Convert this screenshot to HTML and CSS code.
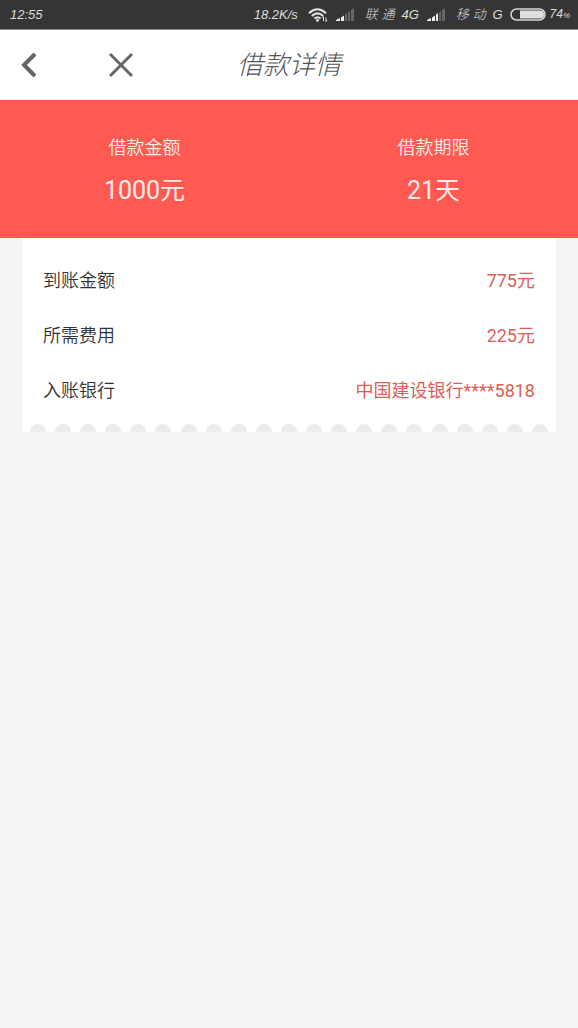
FILE: index.html
```html
<!DOCTYPE html>
<html lang="zh-CN">
<head>
<meta charset="utf-8">
<meta name="viewport" content="width=device-width, initial-scale=1">
<title>借款详情</title>
<link rel="stylesheet" href="styles.css">
</head>
<body>
<div class="status-bar">
  <span class="status-time">12:55</span>
  <div class="status-right">
    <span>18.2K/s</span>
    <svg class="wifi" viewBox="0 0 20 14" width="20" height="14" aria-hidden="true">
      <g fill="none" stroke="#e4e4e4" stroke-width="2">
        <path d="M1 5.2Q9.500-2.600 18 5.200"/>
        <path d="M3.800 8Q9.500 2.800 15.200 8"/>
        <path d="M6.400 10.600Q9.500 7.800 12.600 10.600"/>
      </g>
      <circle cx="9.500" cy="12.300" r="1.500" fill="#e4e4e4"/>
      <path d="M15.500 9v4M18 9.500v4M14.500 10l1-1.500M19 12l-1 1.500" stroke="#e4e4e4" fill="none"/>
    </svg>
    <svg class="signal" viewBox="0 0 19 13" width="19" height="13" aria-hidden="true">
      <path d="M0 13v-1l4-2v3zM5 9.500l3-2V13H5z" fill="#eeeeee"/>
      <path d="M9 6.500l2-1.500v8H9zM12 4.500L14 3v10h-2zM15 2l3-2v13h-3z" fill="#666666"/>
    </svg>
    <span class="carrier">联 通</span>
    <span class="network">4G</span>
    <svg class="signal" viewBox="0 0 19 13" width="19" height="13" aria-hidden="true">
      <path d="M0 13v-1l4-2v3zM5 9.500l3-2V13H5zM9 6.500l2-1.500v8H9z" fill="#eeeeee"/>
      <path d="M12 4.500L14 3v10h-2zM15 2l3-2v13h-3z" fill="#666666"/>
    </svg>
    <span class="carrier">移 动</span>
    <span class="network">G</span>
    <svg class="battery" viewBox="0 0 36 13" width="36" height="13" aria-hidden="true">
      <rect x="1" y="1" width="34" height="11" rx="5.500" fill="none" stroke="#d8d8d8" stroke-width="1.500"/>
      <path d="M10 2.500h20q4 0 4 4t-4 4H10z" fill="#dedede"/>
    </svg>
    <span class="charge">74<small>%</small></span>
  </div>
</div>
<header class="nav">
  <div class="nav-actions">
    <button class="icon-button" type="button" aria-label="返回">
      <svg viewBox="0 0 24 26" width="24" height="26"><path d="M15 2L4 13l11 11" fill="none" stroke="#666666" stroke-width="4"/></svg>
    </button>
    <button class="icon-button" type="button" aria-label="关闭">
      <svg viewBox="0 0 24 26" width="24" height="26"><path d="M1 2l22 22M23 2L1 24" fill="none" stroke="#666666" stroke-width="3"/></svg>
    </button>
  </div>
  <h1 class="nav-title">借款详情</h1>
</header>
<main>
  <dl class="summary">
    <div class="summary-item"><dt>借款金额</dt><dd>1000元</dd></div>
    <div class="summary-item"><dt>借款期限</dt><dd>21天</dd></div>
  </dl>
  <section class="card">
    <dl class="details">
      <div class="row"><dt>到账金额</dt><dd>775元</dd></div>
      <div class="row"><dt>所需费用</dt><dd>225元</dd></div>
      <div class="row"><dt>入账银行</dt><dd>中国建设银行****5818</dd></div>
    </dl>
    <div class="scallops" aria-hidden="true">
      <i></i><i></i><i></i><i></i><i></i><i></i><i></i><i></i><i></i><i></i><i></i><i></i><i></i><i></i><i></i><i></i><i></i><i></i><i></i><i></i><i></i>
    </div>
  </section>
</main>
</body>
</html>
```
FILE: styles.css
```css
* {
  box-sizing: border-box;
}

body {
  margin: 0;
  background: #f4f4f4;
  color: #333333;
  font-family: Roboto, "Noto Sans CJK SC", sans-serif;
  font-size: 18px;
  font-weight: 400;
}

dl,
dd,
h1 {
  margin: 0;
}

.status-bar {
  display: flex;
  align-items: center;
  justify-content: space-between;
  height: 30px;
  padding: 0 8px 0 10px;
  border-bottom: 1px solid #909090;
  background: #353535;
  color: #dcdcdc;
  font-family: "Liberation Sans", "Noto Sans CJK SC", sans-serif;
  font-size: 13px;
  font-style: italic;
  font-weight: 300;
  line-height: 20px;
  white-space: nowrap;
}

.status-right {
  display: flex;
  align-items: center;
}

.wifi,
.carrier {
  margin-left: 10px;
}

.signal {
  margin-left: 8px;
}

.network,
.battery {
  margin-left: 7px;
}

.charge {
  margin-left: 4px;
  font-size: 12px;
}

.charge small {
  font-size: 8px;
}

.nav {
  display: grid;
  grid-template-columns: 1fr auto 1fr;
  align-items: center;
  height: 70px;
  background: #ffffff;
}

.nav-actions {
  display: flex;
  gap: 65px;
  padding-left: 20px;
}

.icon-button {
  display: flex;
  padding: 0;
  border: 0;
  background: none;
}

.nav-title {
  color: #555555;
  font-size: 26px;
  font-style: italic;
  font-weight: 300;
  line-height: 36px;
}

.summary {
  display: grid;
  grid-template-columns: 1fr 1fr;
  padding: 35px 0 29px;
  background: #ff5a52;
  color: #ffecea;
  text-align: center;
}

.summary dt {
  font-weight: 350;
  line-height: 26px;
}

.summary dd {
  margin-top: 12px;
  font-size: 25px;
  line-height: 36px;
}

.card {
  margin: 0 22px;
  background: #ffffff;
}

.details {
  padding: 15px 21px 6px;
}

.row {
  display: flex;
  align-items: center;
  justify-content: space-between;
  min-height: 55px;
  line-height: 26px;
}

.row dt {
  font-weight: 350;
}

.row dd {
  color: #dc5e56;
}

.scallops {
  display: flex;
  justify-content: space-between;
  padding: 0 8px;
}

.scallops i {
  width: 16px;
  height: 8px;
  border-radius: 8px 8px 0 0;
  background: #ececec;
}
```
